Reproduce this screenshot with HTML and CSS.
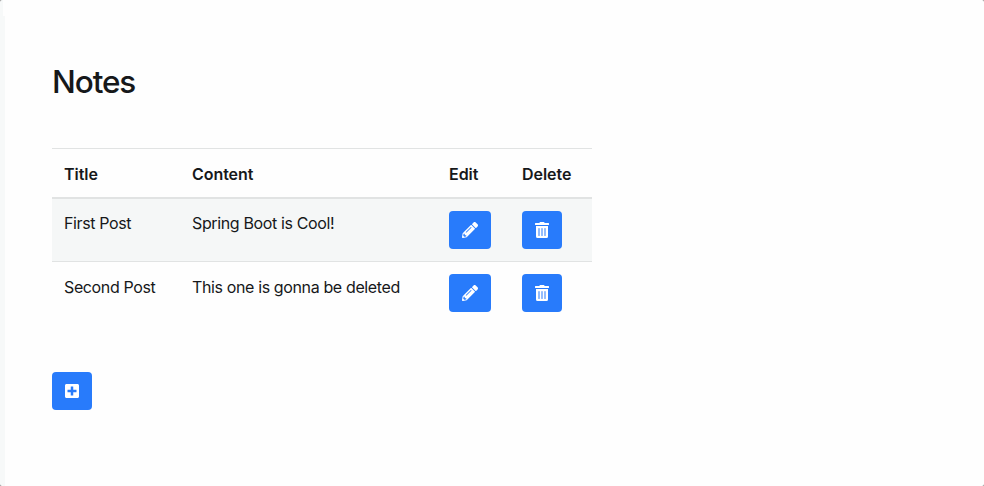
FILE: index.html
```html
<!DOCTYPE html>
<html lang="en">
<head>
<meta charset="utf-8">
<title>Notes</title>
<link rel="stylesheet" href="styles.css">
</head>
<body>
<svg class="sprite" aria-hidden="true">
  <symbol id="pencil" viewBox="0 0 512 512"><path d="M497.9 142.1l-46.1 46.1c-4.7 4.7-12.3 4.7-17 0l-111-111c-4.7-4.7-4.7-12.3 0-17l46.1-46.1c18.7-18.7 49.1-18.7 67.9 0l60.1 60.1c18.8 18.7 18.8 49.1 0 67.9zM284.2 99.8L21.6 362.4.4 483.9c-2.9 16.4 11.4 30.6 27.8 27.8l121.5-21.3 262.6-262.6c4.7-4.7 4.7-12.3 0-17l-111-111c-4.8-4.7-12.4-4.7-17.1 0zM124.1 339.9c-5.5-5.5-5.5-14.3 0-19.8l154-154c5.5-5.5 14.3-5.5 19.8 0s5.5 14.3 0 19.8l-154 154c-5.5 5.5-14.3 5.5-19.8 0zM88 424h48v36.3l-64.5 11.3-31.1-31.1L51.7 376H88v48z"/></symbol>
  <symbol id="trash" viewBox="0 0 448 512"><path d="M32 464a48 48 0 0 0 48 48h288a48 48 0 0 0 48-48V128H32zm272-256a16 16 0 0 1 32 0v224a16 16 0 0 1-32 0zm-96 0a16 16 0 0 1 32 0v224a16 16 0 0 1-32 0zm-96 0a16 16 0 0 1 32 0v224a16 16 0 0 1-32 0zM432 32H312l-9.4-18.7A24 24 0 0 0 281.1 0H166.8a23.72 23.72 0 0 0-21.4 13.3L136 32H16A16 16 0 0 0 0 48v32a16 16 0 0 0 16 16h416a16 16 0 0 0 16-16V48a16 16 0 0 0-16-16z"/></symbol>
  <symbol id="plus" viewBox="0 0 448 512"><path d="M400 32H48C21.5 32 0 53.5 0 80v352c0 26.5 21.5 48 48 48h352c26.5 0 48-21.5 48-48V80c0-26.5-21.5-48-48-48zm-32 252c0 6.6-5.4 12-12 12h-92v92c0 6.6-5.4 12-12 12h-56c-6.6 0-12-5.4-12-12v-92H92c-6.6 0-12-5.4-12-12v-56c0-6.6 5.4-12 12-12h92v-92c0-6.6 5.4-12 12-12h56c6.6 0 12 5.4 12 12v92h92c6.6 0 12 5.4 12 12v56z"/></symbol>
</svg>
<main class="page">
  <h1 class="heading">Notes</h1>
  <table class="notes">
    <colgroup><col class="col-title"><col class="col-content"><col class="col-edit"><col class="col-delete"></colgroup>
    <thead>
      <tr><th>Title</th><th>Content</th><th>Edit</th><th>Delete</th></tr>
    </thead>
    <tbody>
      <tr>
        <td>First Post</td><td>Spring Boot is Cool!</td>
        <td><button class="btn"><svg class="icon icon-wide"><use href="#pencil"/></svg></button></td>
        <td><button class="btn"><svg class="icon"><use href="#trash"/></svg></button></td>
      </tr>
      <tr>
        <td class="text-low">Second Post</td><td class="text-low">This one is gonna be deleted</td>
        <td><button class="btn"><svg class="icon icon-wide"><use href="#pencil"/></svg></button></td>
        <td><button class="btn"><svg class="icon"><use href="#trash"/></svg></button></td>
      </tr>
    </tbody>
  </table>
  <button class="btn"><svg class="icon"><use href="#plus"/></svg></button>
</main>
</body>
</html>
```
FILE: styles.css
```css
* { box-sizing: border-box; }

html { background: #8a8a8a; }

body {
  margin: 0;
  color: #16181a;
  font: 400 16px/24px Inter, "Liberation Sans", sans-serif;
}

.sprite { display: none; }

.page {
  min-height: 486px;
  padding: 63px 52px 0;
  border-radius: 2px;
  background:
    linear-gradient(#f7f9f9, #f7f9f9) 0 0 / 3px 16px no-repeat,
    linear-gradient(#f7f9f9, #f7f9f9) 0 16px / 5px 100% no-repeat,
    #fefefe;
}

.heading {
  margin: 0 0 47px;
  font-size: 31.5px;
  font-weight: 500;
  line-height: 38px;
  letter-spacing: -1.1px;
}

.notes {
  width: 540px;
  margin-bottom: 48px;
  table-layout: fixed;
  border-collapse: separate;
  border-spacing: 0;
}

.col-title { width: 128px; }
.col-content { width: 257px; }
.col-edit { width: 73px; }
.col-delete { width: 82px; }

th, td {
  padding: 12px;
  text-align: left;
  vertical-align: top;
  white-space: nowrap;
}

th {
  padding: 13px 12px 11px;
  border-top: 1px solid #e1e3e3;
  border-bottom: 2px solid #e1e3e3;
  font-weight: 600;
  letter-spacing: -0.05px;
}

td { letter-spacing: -0.37px; }

.text-low { padding-top: 13px; }

tbody tr:nth-child(odd) { background: #f5f7f7; }
tbody tr + tr td { border-top: 1px solid #e1e3e3; }

.btn {
  display: flex;
  align-items: center;
  height: 38px;
  padding: 0 13px;
  border: 0;
  border-radius: 4px;
  background: #287bfb;
  color: #fff;
}

.icon {
  width: 14px;
  height: 16px;
  fill: currentColor;
}

.icon-wide { width: 16px; }
```
